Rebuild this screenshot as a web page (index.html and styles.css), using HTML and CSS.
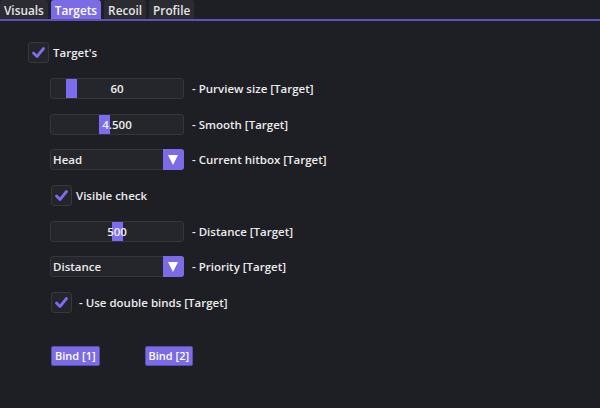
FILE: index.html
```html
<!DOCTYPE html>
<html lang="en">
<head>
    <meta charset="UTF-8">
    <meta name="viewport" content="width=device-width, initial-scale=1.0">
    <title>Targets</title>
    <link rel="stylesheet" href="styles.css">
</head>
<body>
    <!-- Tab bar -->
    <nav class="tabs">
        <div class="tab">Visuals</div>
        <div class="tab active">Targets</div>
        <div class="tab">Recoil</div>
        <div class="tab">Profile</div>
    </nav>

    <!-- Targets page -->
    <main class="panel">
        <label class="check-row">
            <span class="checkbox">
                <svg viewBox="0 0 21 21" width="21" height="21"><polyline points="5.5,11 9,14.5 15.5,6.5" fill="none" stroke="#7c6cf0" stroke-width="2.8" stroke-linecap="round" stroke-linejoin="round"/></svg>
            </span>
            <span>Target's</span>
        </label>

        <div class="options">
            <div class="row">
                <div class="slider">
                    <span class="handle" style="left: 15px"></span>
                    <span class="value">60</span>
                </div>
                <span class="label">- Purview size [Target]</span>
            </div>

            <div class="row">
                <div class="slider">
                    <span class="handle" style="left: 48px"></span>
                    <span class="value">4.500</span>
                </div>
                <span class="label">- Smooth [Target]</span>
            </div>

            <div class="row">
                <div class="dropdown">
                    <span class="current">Head</span>
                    <span class="arrow"></span>
                </div>
                <span class="label">- Current hitbox [Target]</span>
            </div>

            <label class="check-row sub">
                <span class="checkbox">
                    <svg viewBox="0 0 21 21" width="21" height="21"><polyline points="5.5,11 9,14.5 15.5,6.5" fill="none" stroke="#7c6cf0" stroke-width="2.8" stroke-linecap="round" stroke-linejoin="round"/></svg>
                </span>
                <span>Visible check</span>
            </label>

            <div class="row">
                <div class="slider">
                    <span class="handle" style="left: 61px"></span>
                    <span class="value">500</span>
                </div>
                <span class="label">- Distance [Target]</span>
            </div>

            <div class="row">
                <div class="dropdown">
                    <span class="current">Distance</span>
                    <span class="arrow"></span>
                </div>
                <span class="label">- Priority [Target]</span>
            </div>

            <label class="check-row sub wide">
                <span class="checkbox">
                    <svg viewBox="0 0 21 21" width="21" height="21"><polyline points="5.5,11 9,14.5 15.5,6.5" fill="none" stroke="#7c6cf0" stroke-width="2.8" stroke-linecap="round" stroke-linejoin="round"/></svg>
                </span>
                <span>- Use double binds [Target]</span>
            </label>

            <div class="binds">
                <button class="bind">Bind [1]</button>
                <button class="bind">Bind [2]</button>
            </div>
        </div>
    </main>
</body>
</html>
```

FILE: styles.css
```css
body {
    font-family: "Open Sans", "Noto Sans", sans-serif;
    font-weight: 600;
    font-size: 11.5px;
    background-color: #1e1f24;
    color: #ececec;
    margin: 0;
    padding: 0;
}
.tabs {
    display: flex;
    gap: 3px;
    height: 19px;
    border-bottom: 2px solid #5e52b4;
}
.tab {
    height: 19px;
    line-height: 20px;
    padding: 0 4px;
    background-color: #2b2c31;
    border-radius: 3px 3px 0 0;
    color: #e6e6e6;
    font-size: 11.8px;
}
.tab.active {
    background-color: #7b6be6;
    color: #fff;
}
.panel {
    padding: 21px 0 0 28px;
}
.check-row {
    display: flex;
    align-items: center;
    gap: 4px;
    height: 21px;
}
.checkbox {
    width: 19px;
    height: 19px;
    border: 1px solid #3b3833;
    border-radius: 3px;
    background-color: #24252a;
    position: relative;
}
.checkbox svg {
    position: absolute;
    left: -1px;
    top: -1px;
}
.options {
    display: flex;
    flex-direction: column;
    gap: 14.7px;
    margin: 15px 0 0 22px;
}
.row {
    display: flex;
    align-items: center;
    gap: 8px;
    height: 21px;
}
.check-row.sub {
    margin-left: 1px;
}
.check-row.wide {
    gap: 7px;
}
.slider {
    position: relative;
    width: 132px;
    height: 19px;
    border: 1px solid #35363b;
    border-radius: 3px;
    background-color: #25262b;
    text-align: center;
    line-height: 20px;
}
.handle {
    position: absolute;
    top: 0;
    width: 11px;
    height: 19px;
    background-color: #7b6cf0;
}
.value {
    position: relative;
    color: #f0f0f0;
}
.dropdown {
    display: flex;
    width: 132px;
    height: 19px;
    border: 1px solid #35363b;
    border-radius: 3px;
    background-color: #25262b;
    line-height: 20px;
}
.current {
    flex: 1;
    padding-left: 2px;
}
.arrow {
    width: 21px;
    height: 21px;
    margin: -1px -1px 0 0;
    border-radius: 0 3px 3px 0;
    background-color: #7b6be6;
    position: relative;
}
.arrow::after {
    content: "";
    position: absolute;
    left: 5px;
    top: 6px;
    border-left: 5.5px solid transparent;
    border-right: 5.5px solid transparent;
    border-top: 10px solid #fff;
}
.binds {
    display: flex;
    gap: 45px;
    margin: 18px 0 0 1px;
}
.bind {
    font-family: inherit;
    font-weight: 600;
    font-size: 11px;
    color: #fff;
    height: 20px;
    padding: 0 3px;
    background-color: #7b6be6;
    border: 1px solid #5a4fa8;
    border-radius: 2px;
    line-height: 18px;
}
```
